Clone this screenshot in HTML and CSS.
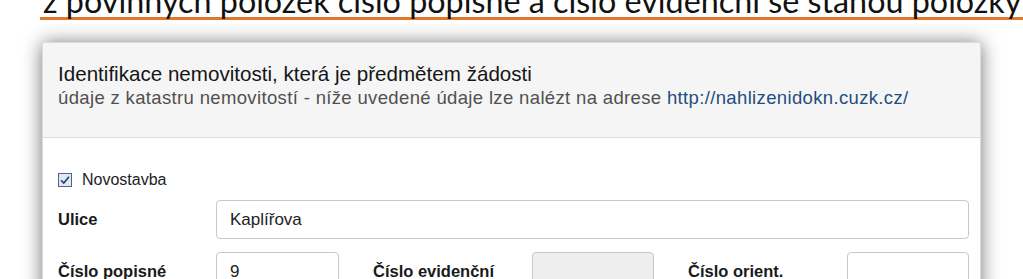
FILE: index.html
```html
<!DOCTYPE html>
<html lang="cs">
<head>
<meta charset="utf-8">
<title>Identifikace nemovitosti</title>
<link rel="stylesheet" href="styles.css">
</head>
<body>
<h1 class="slide-title">z povinných položek číslo popisné a číslo evidenční se stanou položky</h1>
<section class="panel">
  <header class="panel-heading">
    <div class="panel-title">Identifikace nemovitosti, která je předmětem žádosti</div>
    <div class="panel-sub">údaje z katastru nemovitostí - níže uvedené údaje lze nalézt na adrese <a class="link" href="#">http://nahlizenidokn.cuzk.cz/</a></div>
  </header>
  <div class="panel-body">
    <label class="check">
      <svg class="check-box" width="14" height="14" viewBox="0 0 14 14" aria-hidden="true">
        <rect x="0.5" y="0.5" width="13" height="13" fill="#dfe8f4" stroke="#4f6584"/>
        <path d="M3 7.2 L5.8 10 L11 3.8" fill="none" stroke="#1f3f6b" stroke-width="1.6"/>
      </svg>
      <span>Novostavba</span>
    </label>
    <div class="form-grid">
      <div class="lbl">Ulice</div>
      <div class="input wide">Kaplířova</div>

      <div class="lbl">Číslo popisné</div>
      <div class="input">9</div>
      <div class="lbl lbl-mid">Číslo evidenční</div>
      <div class="input disabled"></div>
      <div class="lbl lbl-mid">Číslo orient.</div>
      <div class="input"></div>
    </div>
  </div>
</section>
</body>
</html>
```

FILE: styles.css
```css
html, body {
  margin: 0;
  padding: 0;
  background: #ffffff;
  overflow: hidden;
}

body {
  font-family: "Liberation Sans", Arial, sans-serif;
}

.slide-title {
  margin: -15px 0 0 40px;
  padding: 0 0 1px 3px;
  font-family: Lato, "Liberation Sans", sans-serif;
  font-weight: normal;
  font-size: 32.3px;
  line-height: 31px;
  color: #111;
  white-space: nowrap;
  border-bottom: 3px solid #df7a2c;
}

.panel {
  margin: 22px 0 0 42px;
  width: 939px;
  box-sizing: border-box;
  border: 1px solid #dcdcdc;
  background: #fff;
  box-shadow: 0 1px 18px rgba(0, 0, 0, 0.55);
}

.panel-heading {
  background: #f5f5f5;
  border-bottom: 1px solid #dddddd;
  padding: 19px 15px 28px;
  height: 95px;
  box-sizing: border-box;
}

.panel-title {
  font-size: 20.6px;
  line-height: 24px;
  color: #161616;
}

.panel-sub {
  margin-top: 1px;
  font-size: 18.5px;
  letter-spacing: 0.35px;
  line-height: 21px;
  color: #505050;
}

.link {
  color: #1f4e7e;
  text-decoration: none;
}

.panel-body {
  padding: 33px 11px 20px 15px;
}

.check {
  display: flex;
  align-items: center;
  gap: 10px;
  font-size: 16px;
  color: #222;
  height: 18px;
}

.check-box {
  display: block;
}

.form-grid {
  margin-top: 11px;
  display: grid;
  grid-template-columns: 158px 123px 193px 122px 193px 122px;
  row-gap: 13px;
  align-items: center;
}

.lbl {
  font-weight: bold;
  font-size: 16.5px;
  color: #1a1a1a;
  white-space: nowrap;
}

.lbl-mid {
  padding-left: 34px;
}

.input {
  height: 39px;
  box-sizing: border-box;
  border: 1px solid #c8c8c8;
  border-radius: 4px;
  padding: 0 13px;
  font-size: 17px;
  line-height: 37px;
  color: #222;
  background: #fff;
}

.input.wide {
  grid-column: 2 / 7;
}

.input.disabled {
  background: #eeeeee;
}
```
